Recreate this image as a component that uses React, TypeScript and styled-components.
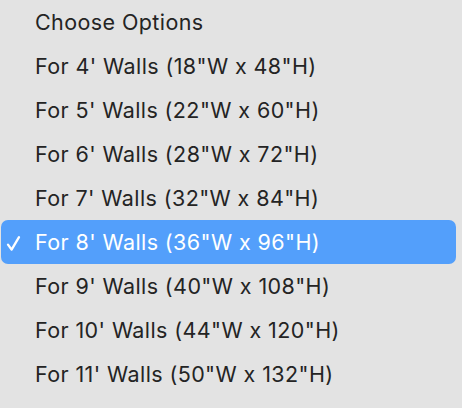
import styled, { createGlobalStyle } from 'styled-components';

const GlobalStyle = createGlobalStyle`
  html, body {
    margin: 0;
    padding: 0;
    background: #e3e3e3;
  }
`;

const Menu = styled.ul`
  list-style: none;
  margin: 0;
  padding: 0 6px 0 1px;
  width: 462px;
  height: 408px;
  box-sizing: border-box;
  background: #e3e3e3;
  font-family: Inter, 'Liberation Sans', sans-serif;
  font-size: 21.5px;
  letter-spacing: 0.4px;
  color: #242424;
`;

const Item = styled.li<{ $selected?: boolean }>`
  position: relative;
  display: flex;
  align-items: center;
  height: 44px;
  padding-left: 34px;
  border-radius: 7px;
  background: ${(p) => (p.$selected ? '#539ffb' : 'transparent')};
  color: ${(p) => (p.$selected ? '#ffffff' : '#242424')};
  white-space: nowrap;
`;

const Check = styled.svg`
  position: absolute;
  left: 5px;
  top: 15px;
  width: 15px;
  height: 17px;
`;

const options = [
  'Choose Options',
  `For 4' Walls (18"W x 48"H)`,
  `For 5' Walls (22"W x 60"H)`,
  `For 6' Walls (28"W x 72"H)`,
  `For 7' Walls (32"W x 84"H)`,
  `For 8' Walls (36"W x 96"H)`,
  `For 9' Walls (40"W x 108"H)`,
  `For 10' Walls (44"W x 120"H)`,
  `For 11' Walls (50"W x 132"H)`,
];

const selected = 5;

export default function App() {
  return (
    <>
      <GlobalStyle />
      <Menu>
        {options.map((label, i) => (
          <Item key={label} $selected={i === selected}>
            {i === selected && (
              <Check viewBox="0 0 15 17">
                <path
                  d="M2 9.6 L5.6 14.6 L13 2.2"
                  fill="none"
                  stroke="#fff"
                  strokeWidth="2.3"
                  strokeLinecap="round"
                  strokeLinejoin="round"
                />
              </Check>
            )}
            {label}
          </Item>
        ))}
      </Menu>
    </>
  );
}
